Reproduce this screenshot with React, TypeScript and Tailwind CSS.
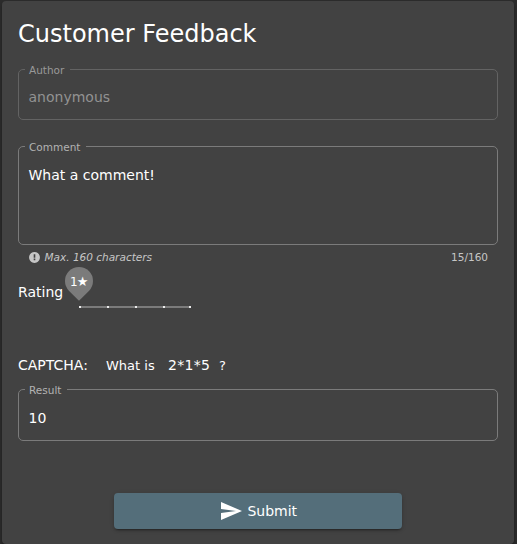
import type { ReactNode } from 'react';

type FieldProps = {
  label: string;
  className: string;
  legendClassName?: string;
  children: ReactNode;
};

function OutlinedField({ label, className, legendClassName = 'text-[#b3b3b3]', children }: FieldProps) {
  return (
    <fieldset className={`w-full min-w-0 rounded-[5px] border px-[10px] ${className}`}>
      <legend className={`-ml-1 h-[11px] pr-[6px] pl-1 text-[10.5px] leading-[13px] ${legendClassName}`}>{label}</legend>
      {children}
    </fieldset>
  );
}

function RatingSlider() {
  return (
    <div className="relative mt-[39px] ml-4 flex h-[2px] w-[112px] bg-[#7b7b7b]">
      {[1, 2, 3, 4].map((n) => (
        <span key={n} className="mr-[26px] h-[2px] w-[2px] shrink-0 bg-[#ececec]" />
      ))}
      <span className="-ml-[2px] h-[2px] w-[2px] shrink-0 bg-[#ececec]" />
      <div className="absolute -top-[39px] -left-[14px] h-7 w-7 rotate-45 rounded-full rounded-br-none bg-[#7b7b7b]" />
      <span className="absolute -top-[38px] -left-[14px] flex w-7 justify-center text-[12px] leading-7 whitespace-nowrap">
        1<b className="-ml-px text-[13px]">★</b>
      </span>
    </div>
  );
}

export default function App() {
  return (
    <div className="h-[544px] w-[517px] overflow-hidden bg-[#2b2b2b] pt-px pl-[2px] font-['DejaVu_Sans',sans-serif] text-sm text-white">
      <main className="flex h-[543px] w-[512px] flex-col rounded bg-[#424242] px-4 pt-[17px] shadow-[0_3px_3px_rgba(0,0,0,0.3)]">
        <h1 className="h-8 text-2xl leading-8">Customer Feedback</h1>

        <OutlinedField label="Author" className="mt-[14px] h-[56px] border-[#636363]" legendClassName="text-[#999]">
          <div className="-ml-[0.5px] mt-[14px] leading-4 text-[#929292]">anonymous</div>
        </OutlinedField>

        <OutlinedField label="Comment" className="mt-[21px] h-[104px] border-[#7b7b7b]">
          <div className="-ml-[0.5px] mt-[15px] leading-4">What a comment!</div>
        </OutlinedField>

        <div className="mt-[6px] flex h-[13px] items-center px-[10px] text-[10.5px] text-[#c6c6c6]">
          <svg viewBox="0 0 24 24" className="mr-[3.5px] h-[13px] w-[13px] fill-current">
            <path d="M12 2C6.480 2 2 6.480 2 12s4.480 10 10 10 10-4.480 10-10S17.520 2 12 2zm1.500 15h-3v-3h3v3zm0-4.500h-3V6h3v6.500z" />
          </svg>
          <em className="leading-[13px]">Max. 160 characters</em>
          <span className="ml-auto leading-[13px]">15/160</span>
        </div>

        <div className="mt-[3px] flex h-[44px] items-start">
          <span className="mt-[17px] leading-4">Rating</span>
          <RatingSlider />
        </div>

        <div className="mt-[46px] flex h-4 leading-4">
          <span className="w-[88px]">CAPTCHA:</span>
          <span className="mt-px w-[62px] text-[13px]">What is</span>
          <span className="w-[51px] tracking-[0.3px]">2*1*5</span>
          <span className="mt-px text-[13px]">?</span>
        </div>

        <OutlinedField label="Result" className="mt-[11px] h-[57px] border-[#7b7b7b]">
          <div className="-ml-[0.5px] mt-[15px] leading-4">10</div>
        </OutlinedField>

        <button className="mx-auto mt-[52px] flex h-9 w-[288px] items-center justify-center rounded bg-[#546e7a] leading-9 shadow-[0_3px_1px_-2px_rgba(0,0,0,0.2),0_2px_2px_rgba(0,0,0,0.14),0_1px_5px_rgba(0,0,0,0.12)]">
          <svg viewBox="0 0 24 24" className="mr-[4.5px] h-6 w-6 fill-current">
            <path d="M2.010 21L23 12 2.010 3 2 10l15 2-15 2z" />
          </svg>
          Submit
        </button>
      </main>
    </div>
  );
}
